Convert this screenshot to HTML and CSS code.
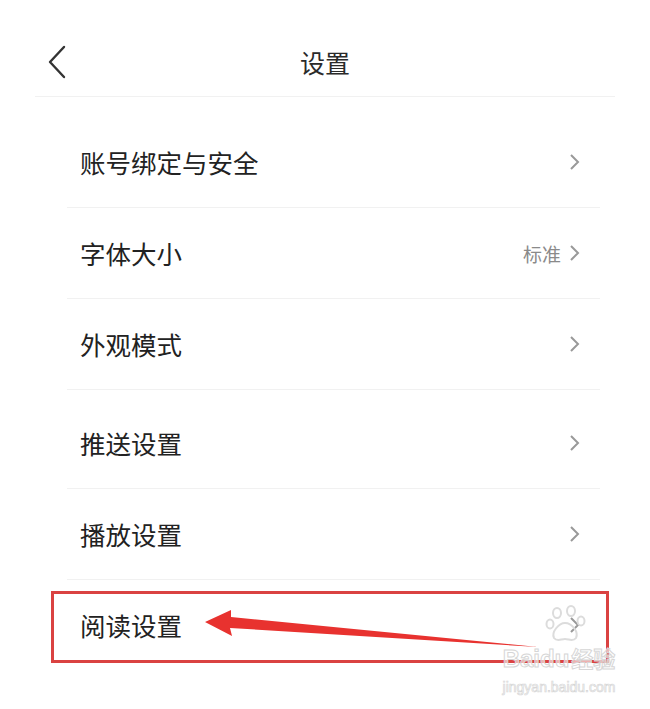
FILE: index.html
```html
<!DOCTYPE html>
<html lang="zh-CN">
<head>
<meta charset="utf-8">
<title>设置</title>
<link rel="stylesheet" href="styles.css">
</head>
<body>
<div class="page">
  <header class="topbar">
    <svg class="back" width="22" height="34" viewBox="0 0 22 34"><path d="M18 2 L4 17 L18 32" fill="none" stroke="#333" stroke-width="2.4" stroke-linecap="round" stroke-linejoin="round"/></svg>
    <h1 class="title">设置</h1>
  </header>
  <div class="list">
    <div class="group">
      <div class="row"><span class="label">账号绑定与安全</span><span class="right"><svg class="chev" width="12" height="18" viewBox="0 0 12 18"><path d="M2 2 L9 9 L2 16" fill="none" stroke="#999" stroke-width="2"/></svg></span></div>
      <div class="row"><span class="label">字体大小</span><span class="right"><span class="value">标准</span><svg class="chev" width="12" height="18" viewBox="0 0 12 18"><path d="M2 2 L9 9 L2 16" fill="none" stroke="#999" stroke-width="2"/></svg></span></div>
      <div class="row"><span class="label">外观模式</span><span class="right"><svg class="chev" width="12" height="18" viewBox="0 0 12 18"><path d="M2 2 L9 9 L2 16" fill="none" stroke="#999" stroke-width="2"/></svg></span></div>
    </div>
    <div class="group group2">
      <div class="row"><span class="label">推送设置</span><span class="right"><svg class="chev" width="12" height="18" viewBox="0 0 12 18"><path d="M2 2 L9 9 L2 16" fill="none" stroke="#999" stroke-width="2"/></svg></span></div>
      <div class="row"><span class="label">播放设置</span><span class="right"><svg class="chev" width="12" height="18" viewBox="0 0 12 18"><path d="M2 2 L9 9 L2 16" fill="none" stroke="#999" stroke-width="2"/></svg></span></div>
      <div class="row last"><span class="label">阅读设置</span><span class="right"><svg class="chev" width="12" height="18" viewBox="0 0 12 18"><path d="M2 2 L9 9 L2 16" fill="none" stroke="#999" stroke-width="2"/></svg></span></div>
    </div>
  </div>

  <div class="highlight"></div>
  <svg class="arrow" width="650" height="709" viewBox="0 0 650 709">
    <polygon points="205,622 231,610 231,617 538,647 230,628 232,636" fill="#e8322f"/>
  </svg>

  <div class="watermark">
    <svg class="paw" width="44" height="40" viewBox="0 0 44 40">
      <g fill="none" stroke="#dcdcdc" stroke-width="2">
        <ellipse cx="12" cy="9" rx="4" ry="5"/>
        <ellipse cx="26" cy="7" rx="4" ry="5"/>
        <ellipse cx="5" cy="20" rx="3.5" ry="4.5"/>
        <ellipse cx="36" cy="17" rx="3.5" ry="4.5"/>
        <path d="M9 34 C6 28 14 19 20 19 C27 19 34 28 31 34 C28 38 24 35 20 35 C16 35 12 38 9 34 Z"/>
      </g>
    </svg>
    <div class="wm-big">Baidu<span class="wm-cn">经验</span></div>
    <div class="wm-small">jingyan.baidu.com</div>
  </div>
</div>
</body>
</html>
```

FILE: styles.css
```css
html, body {
  margin: 0;
  padding: 0;
  background: #ffffff;
}

.page {
  position: relative;
  width: 650px;
  height: 709px;
  overflow: hidden;
  font-family: "Noto Sans CJK SC", "Noto Sans", sans-serif;
  color: #222;
}

.topbar {
  height: 97px;
  margin: 0 35px;
  border-bottom: 1px solid #f1f1f1;
  display: flex;
  align-items: flex-start;
  justify-content: center;
  position: relative;
  box-sizing: border-box;
  padding-top: 46px;
}

.back {
  position: absolute;
  left: 11px;
  top: 45px;
}

.title {
  margin: 0;
  font-size: 25px;
  line-height: 32px;
  font-weight: 400;
  color: #2a2a2a;
}

.list {
  padding-top: 20px;
}

.group2 {
  margin-top: 8px;
}

.row {
  height: 90px;
  margin: 0 50px 0 67px;
  padding: 0 19px 0 13px;
  border-bottom: 1px solid #f1f1f1;
  display: flex;
  align-items: center;
  justify-content: space-between;
}

.row.last {
  border-bottom: none;
}

.label {
  font-size: 25.5px;
  color: #222;
  margin-top: -2px;
}

.right {
  display: flex;
  align-items: center;
  gap: 8px;
}

.value {
  font-size: 19px;
  color: #8a8a8a;
}

.chev {
  display: block;
}

.highlight {
  position: absolute;
  left: 51px;
  top: 591px;
  width: 552px;
  height: 66px;
  border: 3px solid #da4241;
}

.arrow {
  position: absolute;
  left: 0;
  top: 0;
  pointer-events: none;
}

.watermark {
  position: absolute;
  left: 494px;
  top: 604px;
  width: 130px;
  display: flex;
  flex-direction: column;
  align-items: center;
  white-space: nowrap;
  font-family: "Liberation Sans", "Noto Sans CJK SC", sans-serif;
}

.paw {
  margin-left: 16px;
}

.wm-big {
  font-size: 24px;
  font-weight: 700;
  line-height: 26px;
  color: rgba(255, 255, 255, 0.6);
  -webkit-text-stroke: 1px #d6d6d6;
  margin-top: 0;
}

.wm-cn {
  font-family: "Noto Sans CJK SC", sans-serif;
  font-size: 22px;
  margin-left: 2px;
}

.wm-small {
  font-size: 14px;
  line-height: 18px;
  color: rgba(255, 255, 255, 0.6);
  -webkit-text-stroke: 0.7px #d6d6d6;
  margin-top: 6px;
}
```
